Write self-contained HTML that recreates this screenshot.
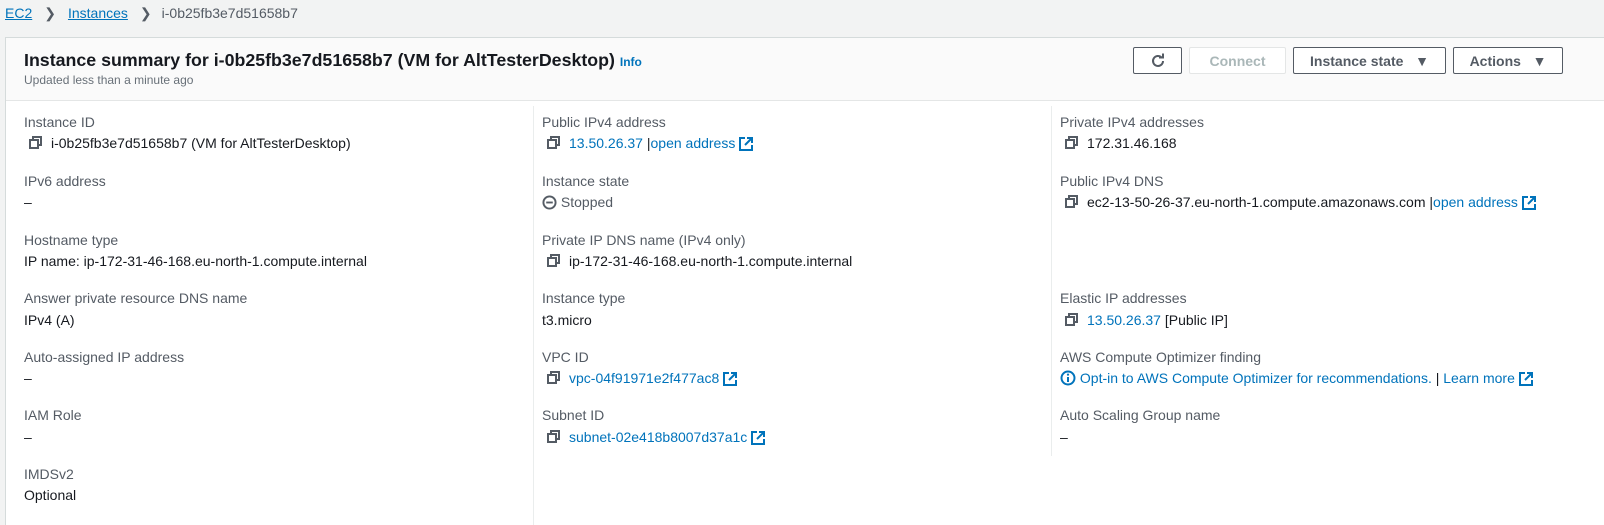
<!DOCTYPE html>
<html><head><meta charset="utf-8"><style>
*{margin:0;padding:0;box-sizing:border-box}
html,body{width:1604px;height:525px;overflow:hidden}
body{background:#f2f3f3;font-family:"Liberation Sans",Arial,sans-serif;font-size:14px;color:#16191f;position:relative}
.a{position:absolute;white-space:nowrap;line-height:18px}
.lb{color:#545b64}
.lk{color:#0073bb}
.crumb{color:#0073bb;text-decoration:underline}
.panel{position:absolute;left:5px;top:37px;width:1599px;height:488px;background:#fff;border:1px solid #d5dbdb;border-bottom:none;border-right:none}
.hdr{position:absolute;left:0;top:0;right:0;height:63px;background:#fafafa;border-bottom:1px solid #e4e6e6}
.btn{position:absolute;top:9px;height:27px;border:1px solid #545b64;border-radius:2px;background:#fff;font-weight:bold;color:#545b64;font-size:14px;display:flex;align-items:center;justify-content:center}
.vl{position:absolute;width:1px;background:#eaeded}
svg{vertical-align:middle}
.ic{display:inline-block;width:13px;height:13px;margin-right:9px;vertical-align:-1px}
.ic svg{display:block}
</style></head><body>
<div class="a" style="left:5px;top:4px"><span class="crumb">EC2</span><span style="color:#545b64;margin:0 12px">&#x276F;</span><span class="crumb">Instances</span><span style="color:#545b64;margin:0 10px 0 12px">&#x276F;</span><span style="color:#545b64">i-0b25fb3e7d51658b7</span></div>
<div class="panel">
 <div class="hdr">
  <div class="a" style="left:18px;top:11px;font-size:17.8px;font-weight:bold;line-height:22px">Instance summary for i-0b25fb3e7d51658b7 (VM for AltTesterDesktop) <span style="color:#0073bb;font-size:12px">Info</span></div>
  <div class="a" style="left:18px;top:33px;font-size:12px;color:#687078">Updated less than a minute ago</div>
  <div class="btn" style="left:1127px;width:49px"><svg width="16" height="16" viewBox="0 0 16 16"><path d="M13 8a5 5 0 1 1-1.5-3.6" fill="none" stroke="#545b64" stroke-width="2"/><path d="M9 4.5h4v-4" fill="none" stroke="#545b64" stroke-width="2"/></svg></div>
  <div class="btn" style="left:1183px;width:97px;border-color:#e4e6e6;color:#aab7b8">Connect</div>
  <div class="btn" style="left:1287px;width:153px">Instance state&nbsp;&nbsp;&nbsp;▼</div>
  <div class="btn" style="left:1447px;width:110px">Actions&nbsp;&nbsp;&nbsp;▼</div>
 </div>
</div>
<div class="vl" style="left:533px;top:106px;height:419px"></div>
<div class="vl" style="left:1051px;top:106px;height:350px"></div>

<div class="a lb" style="left:24px;top:113px">Instance ID</div>
<div class="a" style="left:29px;top:134px"><span class="ic"><svg width="13" height="13" viewBox="0 0 13 13"><rect x="1" y="4" width="8" height="8" fill="none" stroke="#545b64" stroke-width="2"/><path d="M4 4V1h8v8H9" fill="none" stroke="#545b64" stroke-width="2"/></svg></span>i-0b25fb3e7d51658b7 (VM for AltTesterDesktop)</div>
<div class="a lb" style="left:24px;top:172px">IPv6 address</div>
<div class="a" style="left:24px;top:193px">–</div>
<div class="a lb" style="left:24px;top:231px">Hostname type</div>
<div class="a" style="left:24px;top:252px">IP name: ip-172-31-46-168.eu-north-1.compute.internal</div>
<div class="a lb" style="left:24px;top:289px">Answer private resource DNS name</div>
<div class="a" style="left:24px;top:311px">IPv4 (A)</div>
<div class="a lb" style="left:24px;top:348px">Auto-assigned IP address</div>
<div class="a" style="left:24px;top:369px">–</div>
<div class="a lb" style="left:24px;top:406px">IAM Role</div>
<div class="a" style="left:24px;top:428px">–</div>
<div class="a lb" style="left:24px;top:465px">IMDSv2</div>
<div class="a" style="left:24px;top:486px">Optional</div>

<div class="a lb" style="left:542px;top:113px">Public IPv4 address</div>
<div class="a" style="left:547px;top:134px"><span class="ic"><svg width="13" height="13" viewBox="0 0 13 13"><rect x="1" y="4" width="8" height="8" fill="none" stroke="#545b64" stroke-width="2"/><path d="M4 4V1h8v8H9" fill="none" stroke="#545b64" stroke-width="2"/></svg></span><span class="lk">13.50.26.37</span> |<span class="lk">open address <svg width="14" height="14" viewBox="0 0 14 14"><path d="M6 1H1v12h12V8" fill="none" stroke="#0073bb" stroke-width="2"/><path d="M8 1h5v5M13 1L6 8" fill="none" stroke="#0073bb" stroke-width="2"/></svg></span></div>
<div class="a lb" style="left:542px;top:172px">Instance state</div>
<div class="a" style="left:542px;top:193px;color:#545b64"><svg width="15" height="15" viewBox="0 0 16 16" style="vertical-align:-3px"><circle cx="8" cy="8" r="6.5" fill="none" stroke="#545b64" stroke-width="2"/><path d="M4.5 8h7" stroke="#545b64" stroke-width="2"/></svg> Stopped</div>
<div class="a lb" style="left:542px;top:231px">Private IP DNS name (IPv4 only)</div>
<div class="a" style="left:547px;top:252px"><span class="ic"><svg width="13" height="13" viewBox="0 0 13 13"><rect x="1" y="4" width="8" height="8" fill="none" stroke="#545b64" stroke-width="2"/><path d="M4 4V1h8v8H9" fill="none" stroke="#545b64" stroke-width="2"/></svg></span>ip-172-31-46-168.eu-north-1.compute.internal</div>
<div class="a lb" style="left:542px;top:289px">Instance type</div>
<div class="a" style="left:542px;top:311px">t3.micro</div>
<div class="a lb" style="left:542px;top:348px">VPC ID</div>
<div class="a" style="left:547px;top:369px"><span class="ic"><svg width="13" height="13" viewBox="0 0 13 13"><rect x="1" y="4" width="8" height="8" fill="none" stroke="#545b64" stroke-width="2"/><path d="M4 4V1h8v8H9" fill="none" stroke="#545b64" stroke-width="2"/></svg></span><span class="lk">vpc-04f91971e2f477ac8 <svg width="14" height="14" viewBox="0 0 14 14"><path d="M6 1H1v12h12V8" fill="none" stroke="#0073bb" stroke-width="2"/><path d="M8 1h5v5M13 1L6 8" fill="none" stroke="#0073bb" stroke-width="2"/></svg></span></div>
<div class="a lb" style="left:542px;top:406px">Subnet ID</div>
<div class="a" style="left:547px;top:428px"><span class="ic"><svg width="13" height="13" viewBox="0 0 13 13"><rect x="1" y="4" width="8" height="8" fill="none" stroke="#545b64" stroke-width="2"/><path d="M4 4V1h8v8H9" fill="none" stroke="#545b64" stroke-width="2"/></svg></span><span class="lk">subnet-02e418b8007d37a1c <svg width="14" height="14" viewBox="0 0 14 14"><path d="M6 1H1v12h12V8" fill="none" stroke="#0073bb" stroke-width="2"/><path d="M8 1h5v5M13 1L6 8" fill="none" stroke="#0073bb" stroke-width="2"/></svg></span></div>

<div class="a lb" style="left:1060px;top:113px">Private IPv4 addresses</div>
<div class="a" style="left:1065px;top:134px"><span class="ic"><svg width="13" height="13" viewBox="0 0 13 13"><rect x="1" y="4" width="8" height="8" fill="none" stroke="#545b64" stroke-width="2"/><path d="M4 4V1h8v8H9" fill="none" stroke="#545b64" stroke-width="2"/></svg></span>172.31.46.168</div>
<div class="a lb" style="left:1060px;top:172px">Public IPv4 DNS</div>
<div class="a" style="left:1065px;top:193px"><span class="ic"><svg width="13" height="13" viewBox="0 0 13 13"><rect x="1" y="4" width="8" height="8" fill="none" stroke="#545b64" stroke-width="2"/><path d="M4 4V1h8v8H9" fill="none" stroke="#545b64" stroke-width="2"/></svg></span>ec2-13-50-26-37.eu-north-1.compute.amazonaws.com |<span class="lk">open address <svg width="14" height="14" viewBox="0 0 14 14"><path d="M6 1H1v12h12V8" fill="none" stroke="#0073bb" stroke-width="2"/><path d="M8 1h5v5M13 1L6 8" fill="none" stroke="#0073bb" stroke-width="2"/></svg></span></div>
<div class="a lb" style="left:1060px;top:289px">Elastic IP addresses</div>
<div class="a" style="left:1065px;top:311px"><span class="ic"><svg width="13" height="13" viewBox="0 0 13 13"><rect x="1" y="4" width="8" height="8" fill="none" stroke="#545b64" stroke-width="2"/><path d="M4 4V1h8v8H9" fill="none" stroke="#545b64" stroke-width="2"/></svg></span><span class="lk">13.50.26.37</span> [Public IP]</div>
<div class="a lb" style="left:1060px;top:348px">AWS Compute Optimizer finding</div>
<div class="a lk" style="left:1060px;top:369px"><svg width="16" height="16" viewBox="0 0 16 16" style="vertical-align:-3px"><circle cx="8" cy="8" r="6.5" fill="none" stroke="#0073bb" stroke-width="2"/><path d="M8 7v5" stroke="#0073bb" stroke-width="2"/><circle cx="8" cy="4.6" r="1.1" fill="#0073bb"/></svg> Opt-in to AWS Compute Optimizer for recommendations. <span style="color:#16191f">|</span> Learn more <svg width="14" height="14" viewBox="0 0 14 14"><path d="M6 1H1v12h12V8" fill="none" stroke="#0073bb" stroke-width="2"/><path d="M8 1h5v5M13 1L6 8" fill="none" stroke="#0073bb" stroke-width="2"/></svg></div>
<div class="a lb" style="left:1060px;top:406px">Auto Scaling Group name</div>
<div class="a" style="left:1060px;top:428px">–</div>
</body></html>
